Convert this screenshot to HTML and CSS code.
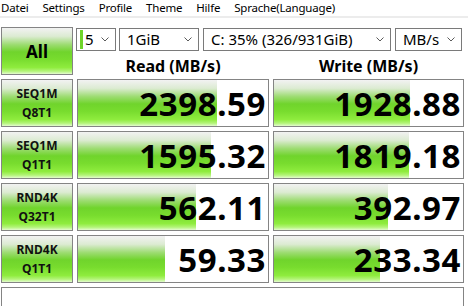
FILE: index.html
```html
<!DOCTYPE html>
<html lang="de">
<head>
    <meta charset="UTF-8">
    <meta name="viewport" content="width=device-width, initial-scale=1.0">
    <title>CrystalDiskMark</title>
    <link rel="stylesheet" href="styles.css">
</head>
<body>

<div class="menu">
    <span>Datei</span>
    <span>Settings</span>
    <span>Profile</span>
    <span>Theme</span>
    <span>Hilfe</span>
    <span>Sprache(Language)</span>
</div>

<div class="main">
    <div class="all">All</div>

    <div class="toolbar">
        <div class="selects">
            <div class="combo combo-count">
                <span class="mark"></span>
                <span class="combo-text">5</span>
                <svg class="chevron" width="8" height="5" viewBox="0 0 8 5"><polyline points="0.5,0.5 4,4 7.5,0.5"/></svg>
            </div>
            <div class="combo combo-size">
                <span class="combo-text">1GiB</span>
                <svg class="chevron" width="8" height="5" viewBox="0 0 8 5"><polyline points="0.5,0.5 4,4 7.5,0.5"/></svg>
            </div>
            <div class="combo combo-drive">
                <span class="combo-text">C: 35% (326/931GiB)</span>
                <svg class="chevron" width="8" height="5" viewBox="0 0 8 5"><polyline points="0.5,0.5 4,4 7.5,0.5"/></svg>
            </div>
            <div class="combo combo-unit">
                <span class="combo-text">MB/s</span>
                <svg class="chevron" width="8" height="5" viewBox="0 0 8 5"><polyline points="0.5,0.5 4,4 7.5,0.5"/></svg>
            </div>
        </div>
        <div class="heads">
            <div>Read (MB/s)</div>
            <div>Write (MB/s)</div>
        </div>
    </div>

    <!-- SEQ1M Q8T1 -->
    <div class="label">SEQ1M<br>Q8T1</div>
    <div class="result"><div class="fill" style="width: 139px"></div><div class="value">2398.59</div></div>
    <div class="result"><div class="fill" style="width: 136px"></div><div class="value">1928.88</div></div>

    <!-- SEQ1M Q1T1 -->
    <div class="label">SEQ1M<br>Q1T1</div>
    <div class="result"><div class="fill" style="width: 133px"></div><div class="value">1595.32</div></div>
    <div class="result"><div class="fill" style="width: 135px"></div><div class="value">1819.18</div></div>

    <!-- RND4K Q32T1 -->
    <div class="label">RND4K<br>Q32T1</div>
    <div class="result"><div class="fill" style="width: 118px"></div><div class="value">562.11</div></div>
    <div class="result"><div class="fill" style="width: 114px"></div><div class="value">392.97</div></div>

    <!-- RND4K Q1T1 -->
    <div class="label">RND4K<br>Q1T1</div>
    <div class="result"><div class="fill" style="width: 87px"></div><div class="value">59.33</div></div>
    <div class="result"><div class="fill" style="width: 106px"></div><div class="value">233.34</div></div>

    <div class="comment"></div>
</div>

</body>
</html>
```

FILE: styles.css
```css
body {
    margin: 0;
    background: #fff;
    font-family: "Noto Sans", sans-serif;
    color: #000;
    overflow: hidden;
}
.menu {
    display: flex;
    gap: 14px;
    height: 16px;
    padding-left: 1px;
    font-size: 11.5px;
    letter-spacing: -0.2px;
    line-height: 15px;
    border-bottom: 2px solid #ececec;
}
.main {
    display: grid;
    grid-template-columns: 72px 192px 191px;
    grid-template-rows: repeat(5, 48px) 19px;
    gap: 4px;
    padding: 9px 0 0 1px;
}
.all, .label, .fill {
    background: linear-gradient(to bottom, #f2f2f2 0%, #dcebd2 18%, #9ddc72 36%, #70d42c 52%, #78dc2e 68%, #8fec3e 86%, #b4f47a 94%, #e4fbcf 100%);
}
.all {
    border: 1px solid #848484;
    display: flex;
    align-items: center;
    justify-content: center;
    font-size: 17px;
    font-weight: bold;
}
.toolbar {
    grid-column: 2 / 4;
}
.selects {
    display: flex;
    margin: 1px 0 0 -1px;
}
.combo {
    display: flex;
    align-items: center;
    height: 21px;
    border: 1px solid #7a7a7a;
    background: #fff;
    padding: 0 6px 0 7px;
    font-size: 15px;
    margin-right: 4px;
}
.combo-text {
    flex: 1;
    line-height: 21px;
}
.combo-count {
    width: 29px;
    padding-left: 3px;
    margin-right: 3px;
}
.combo-size {
    width: 65px;
}
.combo-drive {
    width: 173px;
}
.combo-unit {
    width: 52px;
    margin-right: 0;
}
.mark {
    width: 3px;
    height: 19px;
    background: #6fd42a;
    margin-right: 2px;
}
.chevron {
    fill: none;
    stroke: #5a5a5a;
    stroke-width: 1;
}
.heads {
    display: grid;
    grid-template-columns: 192px 191px;
    gap: 4px;
    margin-top: 4px;
    font-size: 16px;
    font-weight: bold;
    line-height: 22px;
    text-align: center;
}
.label {
    border: 1px solid #848484;
    display: flex;
    flex-direction: column;
    justify-content: center;
    align-items: center;
    font-size: 12px;
    font-weight: bold;
    line-height: 19px;
    color: #111;
    text-align: center;
}
.result {
    border: 1px solid #848484;
    background: #fff;
    display: grid;
}
.fill, .value {
    grid-area: 1 / 1;
}
.value {
    justify-self: end;
    align-self: center;
    padding-right: 2px;
    font-size: 33px;
    font-weight: bold;
    letter-spacing: 0.6px;
    line-height: 45px;
}
.comment {
    grid-column: 1 / 4;
    border: 1px solid #848484;
    border-bottom: none;
}
```
